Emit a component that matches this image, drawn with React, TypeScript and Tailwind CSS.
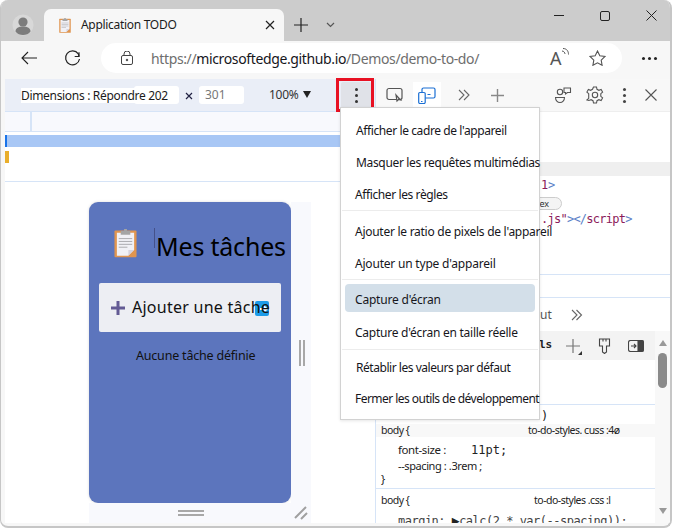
import React from "react";

const ui = { fontFamily: '"Noto Sans", "Open Sans", sans-serif' };
const mono = { fontFamily: '"DejaVu Sans Mono", "Liberation Mono", monospace' };

function Clip({ size }: { size: number }) {
  return (
    <svg width={size} height={(size * 30) / 24} viewBox="0 0 24 30">
      <rect x="0.5" y="1.5" width="23" height="28" rx="1" fill="#e0954f" />
      <path d="M3 4h18v18l-6 6H3z" fill="#f1f1f6" />
      <path d="M15 28l6-6v6z" fill="#e0954f" />
      <path d="M15 28v-6h6z" fill="#d6d3de" />
      <rect x="7" y="2" width="10" height="4" fill="#a5a5a5" />
      <rect x="10.5" y="0" width="3" height="3" fill="#a5a5a5" />
      <path d="M5 10h14M5 13h14M5 16h14M5 19h9" stroke="#a9a9ad" strokeWidth="1" />
    </svg>
  );
}

function Item({ children, cls = "" }: { children: React.ReactNode; cls?: string }) {
  return (
    <div className={`h-8 flex items-center whitespace-nowrap text-[12px] text-[#16161c] ${cls}`}>
      {children}
    </div>
  );
}

export default function App() {
  return (
    <div className="w-[675px] h-[528px] bg-white overflow-hidden" style={ui}>
      <div className="w-[672px] h-[528px] border-2 border-l border-t-0 border-[#c6c6c6] rounded-[8px] overflow-hidden relative flex flex-col bg-[#f7f7f7]">
        {/* title bar */}
        <div className="h-[41px] shrink-0 bg-[#cccccc] flex items-end">
          <div className="w-[43px] h-[41px] flex items-center justify-center pt-[9px]">
            <svg width="22" height="22" viewBox="0 0 22 22">
              <circle cx="11" cy="11" r="10.5" fill="#d8d8d8" />
              <circle cx="11" cy="8" r="4.6" fill="#7c7c7c" />
              <path d="M3.5 17.5c0-3.5 3-5 7.5-5s7.5 1.5 7.5 5c-1.5 2.5-4.5 3.5-7.5 3.5s-6-1-7.5-3.5z" fill="#7c7c7c" />
            </svg>
          </div>
          <div className="w-[240px] h-[32px] bg-[#f7f7f7] rounded-t-[7px] flex items-center pl-[15px]">
            <Clip size={12} />
            <span className="ml-[10px] text-[12px] tracking-[-0.3px] text-[#1b1b1b]">Application TODO</span>
            <svg className="ml-auto mr-[9px]" width="10" height="10" viewBox="0 0 10 10" stroke="#222" strokeWidth="1.2">
              <path d="M1 1l8 8M9 1l-8 8" />
            </svg>
          </div>
          <div className="h-[41px] flex items-center pt-[8px] ml-[9px]">
            <svg width="16" height="16" viewBox="0 0 16 16" stroke="#222" strokeWidth="1.2">
              <path d="M8 1v14M1 8h14" />
            </svg>
            <svg className="ml-[17px]" width="9" height="9" viewBox="0 0 9 9" fill="none" stroke="#555" strokeWidth="1.2">
              <path d="M1 3l3.5 3.5L8 3" />
            </svg>
          </div>
          <div className="ml-auto h-[41px] flex items-center pb-[10px] pr-[13px] gap-[35px]">
            <svg width="11" height="11" viewBox="0 0 11 11" stroke="#222" strokeWidth="1">
              <path d="M0 5.5h10" />
            </svg>
            <svg width="10" height="10" viewBox="0 0 10 10" fill="none" stroke="#222" strokeWidth="1">
              <rect x="0.5" y="0.5" width="9" height="9" rx="1.5" />
            </svg>
            <svg className="ml-[1px]" width="11" height="11" viewBox="0 0 11 11" stroke="#222" strokeWidth="1">
              <path d="M0.5 0.5l10 10M10.5 0.5l-10 10" />
            </svg>
          </div>
        </div>
        {/* address bar */}
        <div className="h-[38px] shrink-0 flex items-center pl-[20px] pb-[4px]">
          <svg width="17" height="14" viewBox="0 0 17 14" fill="none" stroke="#222" strokeWidth="1.1">
            <path d="M16 7H1M7 1L1 7l6 6" />
          </svg>
          <svg className="ml-[26px]" width="18" height="18" viewBox="0 0 18 18" fill="none" stroke="#222" strokeWidth="1.2">
            <path d="M15 3.2v4.3h-4.3" />
            <path d="M15.5 10a7 7 0 1 1-1.2-5.2L15 7.3" />
          </svg>
          <div className="ml-[19px] w-[521px] h-[30px] bg-white rounded-full flex items-center pl-[20px] pr-[16px]">
            <svg width="12" height="14" viewBox="0 0 12 14" fill="none" stroke="#444" strokeWidth="1">
              <rect x="0.5" y="4.5" width="11" height="9" rx="1.5" />
              <path d="M3 4.5V3a3 3 0 0 1 6 0v1.5" />
              <circle cx="6" cy="9" r="0.8" fill="#444" />
            </svg>
            <span className="ml-[18px] text-[14px] tracking-[-0.37px] text-[#6e6e6e] whitespace-nowrap">
              https://<span className="text-[#16161c]">microsoftedge.github.io</span>/Demos/demo-to-do/
            </span>
            <span className="ml-auto flex items-center gap-[21px]">
              <span className="relative text-[18px] leading-none text-[#555] w-[18px]">
                A
                <svg className="absolute left-[11px] -top-[1px]" width="9" height="10" viewBox="0 0 9 10" fill="none" stroke="#555">
                  <path d="M1 3c2 0 3 2 3 3M2 0.5c4 0 5.500 3 5.500 6" />
                </svg>
              </span>
              <svg width="17" height="16" viewBox="0 0 17 16" fill="none" stroke="#555" strokeWidth="1.1">
                <path d="M8.500 1l2.300 4.800 5.200.7-3.800 3.600.9 5.200-4.600-2.500-4.600 2.500.9-5.200L1 6.500l5.200-.7z" />
              </svg>
            </span>
          </div>
          <div className="ml-[20px] flex gap-[3px]">
            <span className="w-[3px] h-[3px] rounded-full bg-[#222]" />
            <span className="w-[3px] h-[3px] rounded-full bg-[#222]" />
            <span className="w-[3px] h-[3px] rounded-full bg-[#222]" />
          </div>
        </div>
        {/* page */}
        <div className="flex-1 flex min-h-0 pl-1 pb-[3px]">
          {/* emulated pane */}
          <div className="w-[370px] shrink-0 flex flex-col bg-white">
            <div className="h-[33px] shrink-0 bg-[#eaeef7] border-b border-[#d6e4f7] flex items-center pl-[16px] text-[12px] text-[#1b1b1b] whitespace-nowrap">
              <span className="relative z-10 bg-white h-[15px] leading-[15px] tracking-[-0.32px] w-[137px] mt-[1px]">Dimensions : Répondre 202</span>
              <span className="w-[45px] h-[18px] bg-white rounded-[3px] -ml-[24px]" />
              <svg className="ml-[6px] mt-[2px]" width="8" height="8" viewBox="0 0 8 8" stroke="#224" strokeWidth="1.2">
                <path d="M1 1l6 6M7 1l-6 6" />
              </svg>
              <span className="ml-[6px] w-[45px] h-[18px] bg-white rounded-[3px] pl-[6px] leading-[18px] text-[#777]">301</span>
              <span className="ml-[25px] text-[#333] tracking-[-0.3px]">100%</span>
              <span className="ml-[5px] mb-[2px] w-0 h-0 border-x-[4px] border-x-transparent border-t-[7px] border-t-[#222]" />
              <span className="ml-[30px] w-[30px] h-[26px] bg-[#e0e2e8] rounded-[2px] flex flex-col items-center justify-center gap-[3px]">
                <span className="w-[3px] h-[3px] rounded-full bg-[#333]" />
                <span className="w-[3px] h-[3px] rounded-full bg-[#333]" />
                <span className="w-[3px] h-[3px] rounded-full bg-[#333]" />
              </span>
            </div>
            <div className="h-[20px] shrink-0 bg-[#f8f9fd] border-b border-[#d6e4f7] pl-[25px]">
              <div className="w-[2px] h-[19px] bg-[#d6e4f7]" />
            </div>
            <div className="h-[50px] shrink-0 border-b border-[#d6e4f7] pt-[3px] flex flex-col gap-[4px]">
              <div className="h-[12px] bg-[#a8c7f5] border-l-2 border-[#1a73e8]" />
              <div className="h-[12px] w-[4px] bg-[#e9ae2b]" />
            </div>
            <div className="flex-1 min-h-0 pl-[84px] pt-[20px]">
              <div className="w-[222px] flex flex-col">
                <div className="flex">
                  <div className="w-[202px] h-[301px] bg-[#5c75bd] rounded-[9px] pt-[27px] pl-[10px] shadow-[0_0_3px_rgba(0,0,0,0.15)] shrink-0">
                    <div className="flex items-start pl-[15px]">
                      <Clip size={23} />
                      <span className="ml-[17px] -mt-[1px] border-l border-[#44518a] pl-[1px] h-[20px] leading-[20px]" />
                      <span className="text-[25px] leading-[34px] text-black whitespace-nowrap tracking-[-0.2px]">Mes tâches</span>
                    </div>
                    <div className="mt-[20px] w-[182px] h-[49px] bg-[#edeef3] rounded-[2px] flex items-center pl-[12px] relative">
                      <svg width="14" height="14" viewBox="0 0 14 14" stroke="#635a94" strokeWidth="3">
                        <path d="M7 0v14M0 7h14" />
                      </svg>
                      <span className="absolute left-[156px] top-[18px] w-[14px] h-[15px] bg-[#1d9be8] rounded-[2px] flex items-center justify-center pl-[4px]">
                        <svg width="8" height="8" viewBox="0 0 8 8" fill="white"><path d="M0 3h4V0l4 4-4 4V5H0z" /></svg>
                      </span>
                      <span className="relative ml-[7px] -mt-[1px] text-[16px] text-[#111] whitespace-nowrap tracking-[0.25px]">Ajouter une tâche</span>
                    </div>
                    <div className="mt-[15px] pl-[37px] text-[12.5px] text-[#111] tracking-[-0.2px] whitespace-nowrap">Aucune tâche définie</div>
                  </div>
                  <div className="w-[20px] bg-[#f8f9fd] flex items-center justify-center gap-[2px] pl-[1px]">
                    <span className="w-[2px] h-[26px] bg-[#a8a8a8]" />
                    <span className="w-[2px] h-[26px] bg-[#a8a8a8]" />
                  </div>
                </div>
                <div className="h-[20px] bg-[#f8f9fd] relative flex flex-col items-center pt-[7px] gap-[2px] pr-[18px]">
                  <span className="w-[26px] h-[2px] bg-[#a8a8a8]" />
                  <span className="w-[26px] h-[2px] bg-[#a8a8a8]" />
                  <svg className="absolute right-[3px] top-[3px]" width="14" height="14" viewBox="0 0 14 14" stroke="#a0a0a0" strokeWidth="2">
                    <path d="M1 12L12 1M7 13l6-6" />
                  </svg>
                </div>
              </div>
            </div>
          </div>
          {/* devtools pane */}
          <div className="flex-1 min-w-0 flex flex-col bg-white border-l border-[#d6e4f7] overflow-hidden">
            <div className="h-[33px] shrink-0 bg-[#f8f8f8] border-b border-[#eeeeee] flex items-center text-[#555] pl-[9px]">
              <svg width="20" height="20" viewBox="0 0 20 20" fill="none" stroke="#555" strokeWidth="1.2">
                <rect x="2" y="3.500" width="15" height="11" rx="2" />
                <path d="M11 10l1 6 1.500-1.500 2 .5z" fill="#f8f8f8" />
              </svg>
              <span className="ml-[8px] w-[28px] h-[26px] bg-white flex items-center justify-center">
                <svg width="18" height="18" viewBox="0 0 18 18" fill="none" stroke="#1a6fd4" strokeWidth="1.2">
                  <rect x="4" y="2" width="13" height="10" rx="1.500" />
                  <rect x="0.700" y="6.500" width="6.500" height="11" rx="1.200" fill="white" />
                  <path d="M9.500 8.500h3M3 15.500h1.500" />
                </svg>
              </span>
              <svg className="ml-[17px]" width="13" height="12" viewBox="0 0 13 12" fill="none" stroke="#666" strokeWidth="1.1">
                <path d="M1 1l5 5-5 5M6 1l5 5-5 5" />
              </svg>
              <svg className="ml-[19px]" width="15" height="15" viewBox="0 0 15 15" stroke="#888" strokeWidth="1.4">
                <path d="M7.500 1v13M1 7.500h13" />
              </svg>
              <svg className="ml-[49px]" width="18" height="18" viewBox="0 0 18 18" fill="none" stroke="#555" strokeWidth="1.1">
                <circle cx="6" cy="6" r="2.700" />
                <path d="M1.500 11.500h9c0 3-2 5-4.500 5s-4.500-2-4.500-5z" />
                <path d="M10 2h6.500v4.500h-3l-2 1.500V6.500H10z" />
              </svg>
              <svg className="ml-[14px]" width="18" height="18" viewBox="0 0 18 18" fill="none" stroke="#555" strokeWidth="1.1">
                <circle cx="9" cy="9" r="2.700" />
                <path d="M7.500 1h3l.5 2.300 1.900 1 2.200-.8 1.500 2.600-1.800 1.600v2.600l1.800 1.600-1.500 2.600-2.200-.8-1.900 1-.5 2.300h-3l-.5-2.300-1.900-1-2.200.8L.9 13.900l1.800-1.600V7.700L.9 6.100l1.500-2.600 2.200.8 1.900-1z" />
              </svg>
              <span className="ml-[19px] flex flex-col gap-[3px]">
                <span className="w-[3px] h-[3px] rounded-full bg-[#444]" />
                <span className="w-[3px] h-[3px] rounded-full bg-[#444]" />
                <span className="w-[3px] h-[3px] rounded-full bg-[#444]" />
              </span>
              <svg className="ml-[19px]" width="12" height="12" viewBox="0 0 12 12" stroke="#555" strokeWidth="1.1">
                <path d="M0.500 0.500l11 11M11.500 0.500l-11 11" />
              </svg>
            </div>
            {/* elements */}
            <div className="h-[162px] shrink-0 bg-white flex flex-col text-[12px] leading-[15px] pl-[165px] whitespace-nowrap" style={mono}>
              <div className="h-[50px] -ml-[165px] shrink-0" />
              <div className="h-[14px] -ml-[165px] shrink-0 bg-[#efefef]" />
              <div className="mt-[2px] text-[#8b1b5a] tracking-[-0.3px]">1<span className="text-[#5b7fc7]">&gt;</span></div>
              <div className="mt-[4px] -ml-[14px] w-[35px] h-[13px] rounded-full border border-[#ccc] bg-[#f4f4f4] text-[9px] leading-[11px] text-[#333] pl-[6px]" style={ui}>flex</div>
              <div className="mt-[2px] text-[#8b1b5a] tracking-[-0.75px]">
                .js"<span className="text-[#5b7fc7]">&gt;&lt;/</span>script<span className="text-[#5b7fc7]">&gt;</span>
              </div>
            </div>
            <div className="h-[24px] shrink-0 border-y border-[#d6e4f7]" />
            <div className="h-[33px] shrink-0 flex items-center pl-[164px] text-[12px] text-[#555]">
              <span>ut</span>
              <svg className="ml-[19px]" width="12" height="12" viewBox="0 0 12 12" fill="none" stroke="#666" strokeWidth="1.1">
                <path d="M1 1l5 5-5 5M5.500 1l5 5-5 5" />
              </svg>
            </div>
            {/* styles */}
            <div className="flex-1 min-h-0 flex relative">
              <div className="flex-1 min-w-0 flex flex-col">
                <div className="h-[29px] shrink-0 bg-[#f3f3f3] flex items-center pl-[163px] text-[11px] font-semibold text-[#222]" style={mono}>
                  <span className="w-[27px]">ls</span>
                  <span className="relative w-[16px] h-[16px] mt-[2px]">
                    <svg width="14" height="14" viewBox="0 0 14 14" stroke="#777" strokeWidth="1.2"><path d="M7 0v14M0 7h14" /></svg>
                    <span className="absolute right-0 bottom-0 w-0 h-0 border-l-[4px] border-l-transparent border-b-[4px] border-b-[#333]" />
                  </span>
                  <svg className="ml-[16px]" width="13" height="16" viewBox="0 0 13 16" fill="none" stroke="#444" strokeWidth="1.1">
                    <path d="M1.500 1h10v7h-3v6l-2 1.500-2-1.500V8h-3zM5 1v2.500M8 1v2.500" />
                  </svg>
                  <svg className="ml-[17px]" width="16" height="12" viewBox="0 0 16 12" fill="none" stroke="#444" strokeWidth="1.1">
                    <rect x="0.500" y="0.500" width="15" height="11" rx="2" />
                    <rect x="10" y="1" width="5" height="10" fill="#444" />
                    <path d="M3 6h5M6 4l2 2-2 2" />
                  </svg>
                </div>
                <div className="h-[45px] shrink-0 border-b border-[#d6e4f7]" />
                <div className="h-[84px] shrink-0 border-b border-[#d6e4f7] pt-[3px] text-[11px] text-[#222]">
                  <div className="text-[12px] leading-[16px] pl-[165px]" style={mono}>)</div>
                  <div className="h-[13px] bg-[#f8f8f8] flex items-center pl-[5px] text-[10.5px] tracking-[-0.5px] whitespace-nowrap">
                    <span className="w-[147px]">body {"{"}</span>
                    <span>to-do-styles. cuss :4ø</span>
                  </div>
                  <div className="pl-[22px] mt-[5px] flex items-center h-[16px] text-[11.5px] tracking-[-0.4px]">
                    <span className="w-[73px]">font-size :</span>
                    <span className="text-[12px] tracking-normal" style={mono}>11pt;</span>
                  </div>
                  <div className="pl-[22px] h-[15px] leading-[15px] tracking-[-0.4px] whitespace-nowrap">--spacing : .3rem ;</div>
                  <div className="pl-[5px] h-[12px] leading-[12px]">{"}"}</div>
                </div>
                <div className="flex-1 min-h-0 overflow-hidden text-[10.5px] text-[#222] pt-[5px]">
                  <div className="h-[13px] flex items-center pl-[5px] tracking-[-0.5px] whitespace-nowrap">
                    <span className="w-[153px]">body {"{"}</span>
                    <span>to-do-styles .css :l</span>
                  </div>
                  <div className="pl-[22px] mt-[5px] text-[12px] leading-[18px] whitespace-nowrap text-[#444] tracking-[-0.5px]" style={mono}>
                    margin: <span className="text-[#222] text-[13px]">▶</span>calc(2 * var(--spacing));
                  </div>
                </div>
              </div>
              <div className="w-[15px] shrink-0 bg-[#f8f8f8] flex flex-col items-center pt-[9px] pb-[9px]">
                <span className="w-0 h-0 border-x-[4px] border-x-transparent border-b-[6px] border-b-[#999]" />
                <span className="mt-[7px] w-[9px] h-[35px] rounded-full bg-[#8a8a8a]" />
                <span className="mt-auto w-0 h-0 border-x-[4px] border-x-transparent border-t-[6px] border-t-[#999]" />
              </div>
            </div>
          </div>
        </div>

        {/* red highlight */}
        <div className="absolute left-[335px] top-[78px] w-[38px] h-[34px] border-[3px] border-[#e81123]" />

        {/* menu */}
        <div className="absolute left-[339px] top-[107px] w-[200px] h-[313px] bg-white border border-[#d2d2d2] shadow-[0_1px_3px_rgba(0,0,0,0.1)] flex flex-col pt-[7px]">
          <div className="pl-[15px] h-[96px] shrink-0 flex flex-col">
            <Item cls="tracking-[-0.4px]">Afficher le cadre de l'appareil</Item>
            <Item cls="tracking-[-0.34px]">Masquer les requêtes multimédias</Item>
            <Item cls="-ml-px tracking-[-0.4px]">Afficher les règles</Item>
          </div>
          <div className="h-px bg-[#ececec] mx-[1px] mt-[-1px] shrink-0" />
          <div className="pl-[14px] pt-[5px] h-[68px] shrink-0">
            <Item cls="tracking-[-0.27px]">Ajouter le ratio de pixels de l'appareil</Item>
            <Item cls="tracking-[-0.2px]">Ajouter un type d'appareil</Item>
          </div>
          <div className="h-px bg-[#ececec] mx-[1px] shrink-0" />
          <div className="mt-[4px] mx-[4px] h-[28px] rounded-[4px] bg-[#d3dfe9] pl-[10px] flex items-center pt-[4px] text-[12px] text-[#16161c] shrink-0">
            <span className="tracking-[-0.2px]">Capture d'écran</span>
          </div>
          <div className="pl-[14px] h-[37px] shrink-0 pt-[5px]">
            <Item cls="tracking-[-0.25px]">Capture d'écran en taille réelle</Item>
          </div>
          <div className="h-px bg-[#ececec] mx-[1px] shrink-0" />
          <div className="pl-[15px] pt-[2px]">
            <Item cls="tracking-[-0.46px]">Rétablir les valeurs par défaut</Item>
            <Item cls="-ml-px -mt-[1px] tracking-[-0.54px]">Fermer les outils de développement</Item>
          </div>
        </div>
      </div>
    </div>
  );
}
